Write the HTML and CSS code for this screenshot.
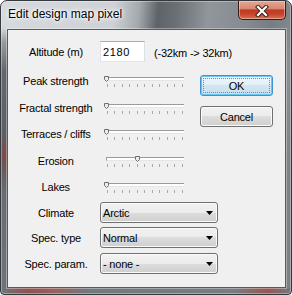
FILE: index.html
```html
<!DOCTYPE html>
<html>
<head>
  <title>Edit design map pixel</title>
  <link rel="stylesheet" href="styles.css">
</head>
<body>
  <div class="window">
    <div class="titlebar">
      <span class="title">Edit design map pixel</span>
      <div class="close">
        <svg width="14" height="12" viewBox="0 0 14 12">
          <path d="M3 2 L11 10 M11 2 L3 10" stroke="#3a2320" stroke-width="4.2" stroke-linecap="square"/>
          <path d="M3 2 L11 10 M11 2 L3 10" stroke="#fff" stroke-width="2.2" stroke-linecap="square"/>
        </svg>
      </div>
    </div>

    <div class="client">
      <div class="alt-row">
        <label class="lbl" for="altitude">Altitude (m)</label>
        <input class="num" type="text" id="altitude" value="2180">
        <span class="hint">(-32km -&gt; 32km)</span>
      </div>

      <div class="middle">
        <div class="sliders">
          <div class="slider-row">
            <label class="lbl">Peak strength</label>
            <div class="slider">
              <div class="track"></div>
              <div class="ticks"><i></i><i></i><i></i><i></i><i></i><i></i><i></i><i></i><i></i><i></i><i></i></div>
              <svg class="thumb" style="left: -1.5px" width="5" height="6" viewBox="0 0 5 6"><path d="M0.5 0.5 H4.5 V3.5 L2.5 5.5 L0.5 3.5 Z" fill="#ececec" stroke="#6f6f6f" stroke-width="1"/></svg>
            </div>
          </div>
          <div class="slider-row">
            <label class="lbl">Fractal strength</label>
            <div class="slider">
              <div class="track"></div>
              <div class="ticks"><i></i><i></i><i></i><i></i><i></i><i></i><i></i><i></i><i></i><i></i><i></i></div>
              <svg class="thumb" style="left: -1.5px" width="5" height="6" viewBox="0 0 5 6"><path d="M0.5 0.5 H4.5 V3.5 L2.5 5.5 L0.5 3.5 Z" fill="#ececec" stroke="#6f6f6f" stroke-width="1"/></svg>
            </div>
          </div>
          <div class="slider-row">
            <label class="lbl">Terraces / cliffs</label>
            <div class="slider">
              <div class="track"></div>
              <div class="ticks"><i></i><i></i><i></i><i></i><i></i><i></i><i></i><i></i><i></i><i></i><i></i></div>
              <svg class="thumb" style="left: -1.5px" width="5" height="6" viewBox="0 0 5 6"><path d="M0.5 0.5 H4.5 V3.5 L2.5 5.5 L0.5 3.5 Z" fill="#ececec" stroke="#6f6f6f" stroke-width="1"/></svg>
            </div>
          </div>
          <div class="slider-row">
            <label class="lbl">Erosion</label>
            <div class="slider">
              <div class="track"></div>
              <div class="ticks"><i></i><i></i><i></i><i></i><i></i><i></i><i></i><i></i><i></i><i></i><i></i></div>
              <svg class="thumb" style="left: 29.3px" width="5" height="6" viewBox="0 0 5 6"><path d="M0.5 0.5 H4.5 V3.5 L2.5 5.5 L0.5 3.5 Z" fill="#ececec" stroke="#6f6f6f" stroke-width="1"/></svg>
            </div>
          </div>
          <div class="slider-row">
            <label class="lbl">Lakes</label>
            <div class="slider">
              <div class="track"></div>
              <div class="ticks"><i></i><i></i><i></i><i></i><i></i><i></i><i></i><i></i><i></i><i></i><i></i></div>
              <svg class="thumb" style="left: -1.5px" width="5" height="6" viewBox="0 0 5 6"><path d="M0.5 0.5 H4.5 V3.5 L2.5 5.5 L0.5 3.5 Z" fill="#ececec" stroke="#6f6f6f" stroke-width="1"/></svg>
            </div>
          </div>
        </div>

        <div class="buttons">
          <button class="btn btn-default">OK</button>
          <button class="btn">Cancel</button>
        </div>
      </div>

      <div class="combos">
        <div class="combo-row">
          <label class="lbl">Climate</label>
          <div class="combo"><span>Arctic</span><svg width="7" height="4" viewBox="0 0 7 4"><path d="M0 0 H7 L3.5 4 Z" fill="#000"/></svg></div>
        </div>
        <div class="combo-row">
          <label class="lbl">Spec. type</label>
          <div class="combo"><span>Normal</span><svg width="7" height="4" viewBox="0 0 7 4"><path d="M0 0 H7 L3.5 4 Z" fill="#000"/></svg></div>
        </div>
        <div class="combo-row">
          <label class="lbl">Spec. param.</label>
          <div class="combo"><span>- none -</span><svg width="7" height="4" viewBox="0 0 7 4"><path d="M0 0 H7 L3.5 4 Z" fill="#000"/></svg></div>
        </div>
      </div>
    </div>
  </div>
</body>
</html>
```

FILE: styles.css
```css
body {
  margin: 0;
  font-family: "Liberation Sans", Arial, sans-serif;
  background-color: #fff;
}

.window {
  width: 292px;
  height: 295px;
  box-sizing: border-box;
  display: flex;
  flex-direction: column;
  padding: 0 5px 6px 6px;
  border: 1px solid #34393e;
  border-radius: 7px 7px 4px 4px;
  box-shadow: inset 0 0 0 1px rgba(255, 255, 255, 0.35);
  background:
    linear-gradient(to bottom, rgba(0, 0, 0, 0) 9%, #959a9f 14%, #62686e 24%, #5a6066 45%, #7d4a4b 53%, #6a5a5c 58%, #676d73 66%, #6e747a 100%) 0 0 / 6px 100% no-repeat,
    linear-gradient(to right, #6e747a 0%, #8f5452 9%, #9a5f5b 18%, #72787e 30%, #777d83 80%, #985654 92%, #72787e 100%) 0 100% / 100% 6px no-repeat,
    linear-gradient(to bottom, rgba(0, 0, 0, 0) 9%, #8a9096 20%, #7c8288 60%, #7a8086 100%) 100% 0 / 5px 100% no-repeat,
    linear-gradient(95deg, #d6dadd 0%, #ced2d6 36%, #a4a9ae 44%, #5d6369 50%, #6a7076 56%, #90969b 66%, #858b91 78%, #777d83 86%, #8d9399 100%);
}

.titlebar {
  height: 28px;
  display: flex;
  align-items: flex-start;
  padding-left: 1px;
}

.title {
  padding-top: 6px;
  font-size: 12px;
  line-height: 15px;
  color: #000;
  text-shadow: 0 0 6px #fff, 0 0 4px #fff, 0 0 2px #fff;
}

.close {
  margin-left: auto;
  width: 48px;
  height: 19px;
  box-sizing: border-box;
  border: 1px solid #3e1a13;
  border-top: none;
  border-radius: 0 0 5px 5px;
  background: linear-gradient(to bottom, #e6a594 0%, #d98873 42%, #c13a1f 50%, #c4432b 72%, #db6d50 100%);
  box-shadow: inset 0 0 0 1px rgba(255, 230, 220, 0.45);
  display: flex;
  align-items: center;
  justify-content: center;
}

.close svg {
  display: block;
  margin-top: 1px;
}

.client {
  height: 259px;
  box-sizing: border-box;
  border: 1px solid #565b61;
  box-shadow: 0 0 0 1px rgba(255, 255, 255, 0.35);
  background-color: #f0f0f0;
  padding: 11px 0 0 8px;
  font-size: 11px;
  letter-spacing: -0.2px;
  color: #000;
}

.lbl {
  display: block;
  width: 80px;
  text-align: center;
  white-space: nowrap;
  line-height: 13px;
}

.alt-row {
  display: flex;
  align-items: center;
  height: 21px;
}

.alt-row .lbl {
  padding-top: 2px;
}

.num {
  margin-left: 4px;
  width: 45px;
  height: 21px;
  box-sizing: border-box;
  padding: 0 0 0 2px;
  border: 1px solid #abadb3;
  border-left-color: #e2e3ea;
  border-right-color: #dbdfe6;
  border-bottom-color: #e3e9ef;
  font-family: inherit;
  font-size: 11px;
  letter-spacing: 0.6px;
  color: #000;
  background-color: #fff;
}

.hint {
  margin-left: 9px;
  padding-top: 2px;
}

.middle {
  display: flex;
}

.sliders {
  padding-top: 11px;
  width: 168px;
}

.slider-row {
  display: flex;
  height: 22px;
  margin-bottom: 4.5px;
}

.slider-row:last-child {
  margin-bottom: 0;
}

.slider-row .lbl {
  padding-top: 2px;
}

.slider {
  position: relative;
  margin: 4px 0 0 10px;
  width: 79px;
}

.track {
  height: 2px;
  border-top: 1px solid #9a9a9a;
  border-left: 1px solid #9a9a9a;
  background-color: #fff;
  border-bottom: 1px solid #e6e6e6;
}

.ticks {
  display: flex;
  justify-content: space-between;
  margin: 3px 1px 0 1px;
}

.ticks i {
  display: block;
  width: 1px;
  height: 3px;
  background-color: #a9a9a9;
}

.thumb {
  position: absolute;
  top: -1px;
}

.buttons {
  margin-left: 16px;
  padding-top: 13px;
  display: flex;
  flex-direction: column;
  gap: 10px;
}

.btn {
  width: 73px;
  height: 21px;
  box-sizing: border-box;
  border: 1px solid #707070;
  border-radius: 3px;
  background: linear-gradient(to bottom, #f2f2f2 0%, #ebebeb 50%, #dddddd 50%, #cfcfcf 100%);
  box-shadow: inset 0 0 0 1px #fbfbfb;
  font-family: inherit;
  font-size: 11px;
  letter-spacing: -0.2px;
  color: #000;
  padding: 0;
}

.btn-default {
  border-color: #3c93d3;
  background: linear-gradient(to bottom, #eef6fb 0%, #e2eff7 50%, #d2e6f2 50%, #c7dfee 100%);
  box-shadow: inset 0 0 0 1px #67c6f2;
  outline: 1px dotted #c46a6a;
  outline-offset: -4px;
}

.combos {
  padding-top: 0.5px;
}

.combo-row {
  display: flex;
  align-items: center;
  height: 21px;
  margin-bottom: 4.7px;
}

.combo-row .lbl {
  padding-top: 2px;
}

.combo {
  margin-left: 4px;
  width: 118px;
  height: 21px;
  box-sizing: border-box;
  border: 1px solid #707070;
  border-radius: 3px;
  background: linear-gradient(to bottom, #f2f2f2 0%, #ebebeb 50%, #dddddd 50%, #cfcfcf 100%);
  box-shadow: inset 0 0 0 1px #fbfbfb;
  display: flex;
  align-items: center;
  padding: 0 4px 0 2px;
}

.combo span {
  flex: 1;
  padding-top: 1px;
}

.combo svg {
  display: block;
  margin-top: 1px;
}
```
